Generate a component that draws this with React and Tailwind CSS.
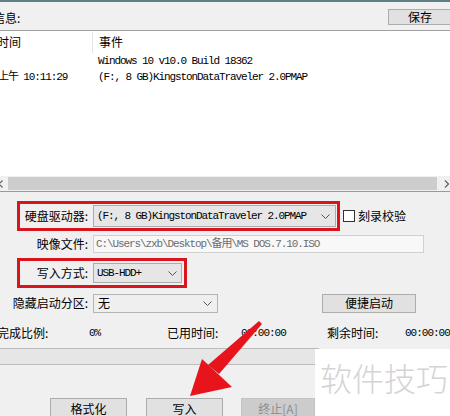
const cjk = "font-['Noto_Sans_CJK_SC','Noto_Sans',sans-serif]";
const mono = "font-['Liberation_Mono','Noto_Sans_CJK_SC',monospace]";

const Chevron = () => (
  <svg width="9" height="5" viewBox="0 0 9 5" className="shrink-0">
    <polyline points="0.5,0.5 4.5,4.5 8.5,0.5" fill="none" stroke="#555" strokeWidth="1" />
  </svg>
);

const Field = ({ label, boxed, className = '', children }) => (
  <div className={`ml-[17px] flex items-center ${className}`}>
    <div
      className={`flex h-full items-center border-[3px] ${boxed ? 'border-[#d8141c]' : 'border-transparent'}`}
    >
      <div className="flex w-[68px] shrink-0 justify-end">
        <span className="shrink-0 whitespace-nowrap leading-none">{label}</span>
      </div>
      <div className="ml-[5px] flex items-center">{children}</div>
    </div>
  </div>
);

const Button = ({ children, disabled, className = '' }) => (
  <div
    className={`flex shrink-0 items-center justify-center border leading-none ${
      disabled ? 'border-[#c4c4c4] bg-[#cccccc] text-[#8d8d8d]' : 'border-[#adadad] bg-[#e1e1e1] text-black'
    } ${className}`}
  >
    {children}
  </div>
);

const App = () => {
  return (
    <div className={`relative h-[416px] w-[450px] overflow-hidden bg-[#f0f0f0] text-[12px] text-black ${cjk}`}>
      <div className="h-[2px] bg-[#5f7f86]" />

      <div className="flex h-[29px] items-center justify-between border-b border-[#a0a0a0]">
        <span className="ml-[-7px] mt-[3px] leading-none">信息:</span>
        <Button className="mr-[-2px] mt-[1px] h-[16px] w-[64px]">保存</Button>
      </div>

      <div className="flex h-[161px] flex-col border-b border-[#9a9a9a] bg-white">
        <div className="flex h-[22px] items-center">
          <span className="ml-[-3px] w-[95px] leading-none">时间</span>
          <div className="h-[21px] w-px bg-[#e3e3e3]" />
          <span className="ml-[6px] leading-none">事件</span>
        </div>
        <div className={`flex h-[16px] items-center text-[11px] tracking-[-1.1px] ${mono}`}>
          <span className="ml-[98px]">Windows 10 v10.0 Build 18362</span>
        </div>
        <div className={`flex h-[16px] items-center text-[11px] tracking-[-1.1px] ${mono}`}>
          <span className="ml-[-2px] w-[100px]">上午 10:11:29</span>
          <span>(F:, 8 GB)KingstonDataTraveler 2.0PMAP</span>
        </div>

        <div className="mt-auto flex h-[15px] items-center bg-[#f0f0f0]">
          <svg width="6" height="8" viewBox="0 0 6 8" className="ml-[-2px] shrink-0">
            <polyline points="4.5,0.5 1,4 4.5,7.5" fill="none" stroke="#606060" strokeWidth="1.2" />
          </svg>
          <div className="ml-[4px] h-[13px] w-[431px] bg-[#cdcdcd]" />
          <svg width="6" height="8" viewBox="0 0 6 8" className="ml-[7px] shrink-0">
            <polyline points="1,0.5 4.5,4 1,7.5" fill="none" stroke="#606060" strokeWidth="1.2" />
          </svg>
        </div>
      </div>

      <Field label="硬盘驱动器:" boxed className="mt-[9px] h-[30px]">
        <div
          className={`flex h-[22px] w-[243px] items-center justify-between border border-[#acacac] bg-[#e6e6e6] pl-[3px] pr-[5px] text-[11px] tracking-[-1.1px] ${mono}`}
        >
          <span>(F:, 8 GB)KingstonDataTraveler 2.0PMAP</span>
          <Chevron />
        </div>
        <div className="w-px" />
        <div className="absolute left-[343px] flex items-center">
          <div className="h-[12px] w-[12px] border border-[#333333] bg-white" />
          <span className="ml-[3px] leading-none">刻录校验</span>
        </div>
      </Field>

      <Field label="映像文件:" className="mt-[2px] h-[22px]">
        <div
          className={`flex h-[18px] w-[331px] items-center border border-[#d0d0d0] bg-[#f8f8f8] pl-[2px] text-[11px] tracking-[-1.1px] text-[#6d6d6d] ${mono}`}
        >
          C:\Users\zxb\Desktop\备用\MS DOS.7.10.ISO
        </div>
      </Field>

      <Field label="写入方式:" boxed className="mt-[3px] h-[30px]">
        <div
          className={`flex h-[20px] w-[89px] items-center justify-between border border-[#acacac] bg-[#e6e6e6] pl-[3px] pr-[4px] text-[11px] tracking-[-1.1px] ${mono}`}
        >
          <span>USB-HDD+</span>
          <Chevron />
        </div>
        <div className="w-[2px]" />
      </Field>

      <Field label="隐藏启动分区:" className="mt-[4px] h-[22px]">
        <div className="flex h-[19px] w-[125px] items-center justify-between border border-[#b5b5b5] bg-[#efefef] pl-[4px] pr-[5px]">
          <span className="text-[12px] leading-none">无</span>
          <Chevron />
        </div>
        <Button className="ml-[104px] h-[19px] w-[94px]">便捷启动</Button>
      </Field>

      <div className="mt-[8px] flex h-[22px] items-center leading-none">
        <span className="ml-[-3px] w-[92px] shrink-0">完成比例:</span>
        <span className={`w-[78px] shrink-0 text-[11px] tracking-[-1.1px] ${mono}`}>0%</span>
        <span className="w-[74px] shrink-0">已用时间:</span>
        <span className={`w-[86px] shrink-0 text-[11px] tracking-[-1px] ${mono}`}>00:00:00</span>
        <span className="w-[78px] shrink-0">剩余时间:</span>
        <span className={`shrink-0 text-[11px] tracking-[-1px] ${mono}`}>00:00:00</span>
      </div>

      <div className="mt-[4px] ml-[-1px] h-[17px] w-[320px] border border-[#bcbcbc] bg-[#e6e6e6]" />

      <div className="mt-[33px] flex">
        <Button className="ml-[50px] h-[21px] w-[77px]">格式化</Button>
        <Button className="ml-[19px] h-[21px] w-[77px]">写入</Button>
        <Button disabled className="ml-[18px] h-[21px] w-[74px]">终止[A]</Button>
      </div>

      <div className="absolute bottom-0 left-[315px] right-0 top-[349px] bg-white">
        <div className="ml-[5px] mt-[12px] text-[32px] font-light leading-[32px] text-[#d4d4d4]">软件技巧</div>
      </div>

      <svg className="pointer-events-none absolute left-0 top-0" width="450" height="416" viewBox="0 0 450 416">
        <polygon points="259,321 262,324 219,374 208,365" fill="#e8141c" />
        <polygon points="190,396 202,359 232,387" fill="#e8141c" />
      </svg>
    </div>
  );
};

export default App;
